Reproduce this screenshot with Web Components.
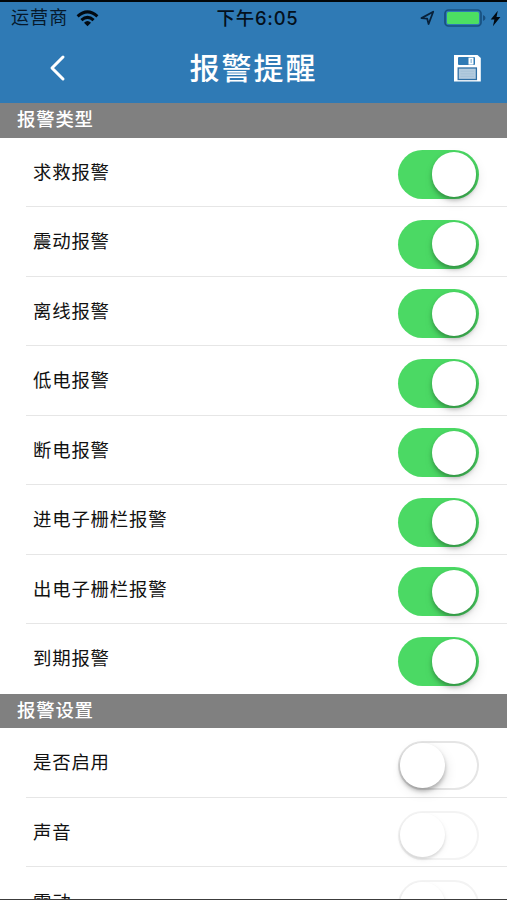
<!DOCTYPE html>
<html lang="zh-CN">
<head>
<meta charset="utf-8">
<title>报警提醒</title>
<style>
html,body{margin:0;height:900px;overflow:hidden;background:#fff}
body{font-family:"Liberation Sans","Noto Sans CJK SC",sans-serif}
</style>
</head>
<body>
<alarm-page></alarm-page>
<script>
const define = (name, html, setup) => customElements.define(name, class extends HTMLElement {
  constructor() {
    super();
    const t = document.createElement('template');
    t.innerHTML = html;
    this.attachShadow({mode: 'open'}).append(t.content.cloneNode(true));
    if (setup) setup(this);
  }
});

define('status-bar', `
<style>
:host{display:grid;grid-template-columns:1fr auto 1fr;align-items:center;height:32px;padding:0 7px 0 11px;box-sizing:border-box;color:#06182a;font-size:18px;line-height:32px}
div{display:flex;align-items:center}
.carrier{letter-spacing:1.1px}
.time{font-family:Inter,"Noto Sans CJK SC",sans-serif;font-weight:500;font-size:18.4px;letter-spacing:.8px;margin-left:4px;color:#04101c}
.right{justify-content:flex-end}
svg{display:block;flex:none}
</style>
<div><span class="carrier">运营商</span>
<svg style="margin-left:8px" width="23" height="17" viewBox="0 0 23 17"><g fill="none" stroke="#020a12" stroke-width="3"><path d="M1.6 6.3Q11.5-2.6 21.4 6.3"/><path d="M5.4 10.2Q11.5 4.5 17.6 10.2"/></g><path d="M8 12.7Q11.5 9.5 15 12.7L11.5 16.3Z" fill="#020a12"/></svg></div>
<div class="time">下午6:05</div>
<div class="right">
<svg width="15" height="16" viewBox="0 0 15 16"><path d="M1.5 8.1L13.2 1.8L8.6 14L7.2 8.7Z" fill="none" stroke="#08213a" stroke-width="1.8" stroke-linejoin="round"/></svg>
<svg style="margin-left:9px" width="42" height="18" viewBox="0 0 42 18"><rect x="1" y="1" width="36" height="16" rx="3.5" fill="none" stroke="#185080" stroke-width="1.7"/><rect x="3" y="3" width="32" height="12" rx="1.5" fill="#4cdf62"/><path d="M39 6Q41.5 6.8 41.5 9T39 12Z" fill="#185080"/></svg>
<svg style="margin:0 -1px 0 4px" width="11" height="17" viewBox="0 0 11 17"><path d="M7.8.8L.7 9.4H4.4L2.9 16.2L10.4 7H6.5Z" fill="#020a12"/></svg>
</div>`);

define('nav-bar', `
<style>
:host{display:grid;grid-template-columns:90px 1fr 90px;align-items:center;height:69px;box-sizing:border-box;padding-bottom:2px;color:#fff}
h1{margin:0;padding-top:2px;text-align:center;font-size:30px;font-weight:500;line-height:44px;letter-spacing:2px}
svg{display:block}
.back{margin-left:49px}
.save{margin-left:36px}
</style>
<svg class="back" width="17" height="28" viewBox="0 0 17 28"><path d="M14 3L3 14L14 25" fill="none" stroke="#fff" stroke-width="3" stroke-linecap="round" stroke-linejoin="round"/></svg>
<h1><slot></slot></h1>
<svg class="save" width="28" height="28" viewBox="0 0 28 28"><path d="M1 1H24.5L27.8 4V27.5H1Z" fill="#fff"/><rect x="5" y="3" width="17" height="8" rx="1" fill="#2f7ab5"/><rect x="15.5" y="3.6" width="5" height="7" fill="#fff"/><rect x="17.4" y="5" width="1.6" height="4" fill="#a9c8e0"/><rect x="5.2" y="14" width="18.2" height="11.5" fill="#b3cbde" stroke="#2f6fa5" stroke-width="1.3"/><path d="M7.5 17.2H21M7.5 19.8H21M7.5 22.4H21" stroke="#a2bfd6" stroke-width=".8"/></svg>`);

define('section-title', `
<style>
:host{display:flex;align-items:center;height:34.5px;box-sizing:border-box;padding:0 17px;background:#808080;color:#fff;font-size:18.4px;line-height:28px;font-weight:500;letter-spacing:.8px}
</style><slot></slot>`);

define('toggle-switch', `
<style>
:host{display:flex;box-sizing:border-box;width:80.5px;height:49px;padding:2.3px;border-radius:25px;background:#4bd964;justify-content:flex-end}
i{display:block;width:44.4px;height:44.4px;border-radius:50%;background:#fff;box-shadow:0 3px 4px rgba(0,0,0,.27),2px 5px 12px rgba(0,0,0,.10)}
:host([off]){background:#fff;box-shadow:inset 0 0 0 2px #e5e5e5;justify-content:flex-start}
:host([off][disabled]){box-shadow:inset 0 0 0 2px #f3f3f3}
:host([disabled]) i{box-shadow:0 2px 3px rgba(0,0,0,.13),1px 3px 7px rgba(0,0,0,.04)}
</style><i></i>`);

define('alarm-row', `
<style>
:host{display:block;height:69.55px;padding-left:26px}
div{display:flex;justify-content:space-between;height:100%;box-sizing:border-box;padding:12.5px 28.5px 0 7px;border-bottom:1px solid #e6e6e6}
:host([last]) div{border-color:transparent}
span{font-size:18.4px;line-height:28px;letter-spacing:.8px;color:#111;margin-top:8.6px}
toggle-switch{margin-top:.2px}
</style><div><span><slot></slot></span><toggle-switch></toggle-switch></div>`);

customElements.define('alarm-list', class extends HTMLElement {
  connectedCallback() {
    const root = this.shadowRoot || this.attachShadow({mode: 'open'});
    const items = this.getAttribute('items').split(',');
    root.innerHTML = '<style>:host{display:block;background:#fff}</style>';
    items.forEach((name, i) => {
      const row = document.createElement('alarm-row');
      row.textContent = name;
      if (i === items.length - 1) row.setAttribute('last', '');
      if (this.hasAttribute('off')) {
        const sw = row.shadowRoot.querySelector('toggle-switch');
        sw.setAttribute('off', '');
        if (i > 0) sw.setAttribute('disabled', '');
      }
      root.append(row);
    });
  }
});

define('alarm-page', `
<style>
:host{display:block;width:507px;height:900px;box-sizing:border-box;overflow:hidden;border-top:2px solid #020609;border-bottom:1px solid #3c3c3c;background:#fff}
header{background:#2f7ab5}
</style>
<header><status-bar></status-bar><nav-bar>报警提醒</nav-bar></header>
<section-title>报警类型</section-title>
<alarm-list items="求救报警,震动报警,离线报警,低电报警,断电报警,进电子栅栏报警,出电子栅栏报警,到期报警"></alarm-list>
<section-title>报警设置</section-title>
<alarm-list off items="是否启用,声音,震动"></alarm-list>`);
</script>
</body>
</html>
